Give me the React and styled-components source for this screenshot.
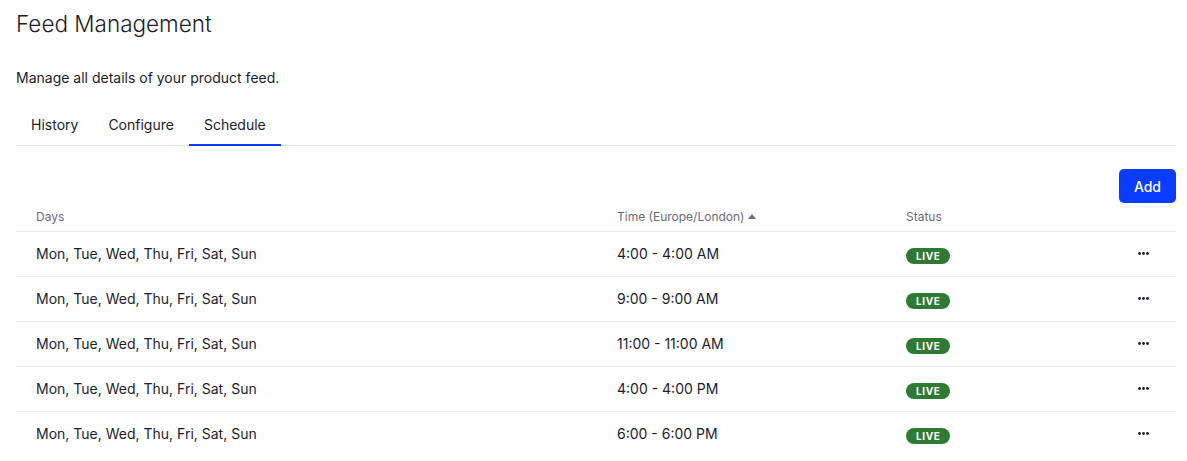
import React from "react";
import styled, { createGlobalStyle } from "styled-components";

const Global = createGlobalStyle`
  html, body { margin: 0; padding: 0; background: #fff; }
  body { font-family: Inter, "Noto Sans", sans-serif; color: #1f1f2e; }
  * { box-sizing: border-box; }
`;

const Page = styled.div`
  padding: 10px 11px 0 16px;
`;

const Title = styled.h1`
  margin: 0;
  font-size: 22.5px;
  font-weight: 300;
  line-height: 28px;
  color: #1c1c2b;
`;

const Subtitle = styled.p`
  margin: 0;
  margin-top: 30px;
  font-size: 14px;
  line-height: 20px;
  color: #1c1c2b;
`;

const Tabs = styled.div`
  display: flex;
  margin-top: 19px;
  border-bottom: 1px solid #e6e6ea;
`;

const Tab = styled.button`
  background: none;
  border: none;
  font-family: inherit;
  font-size: 14px;
  color: #1c1c2b;
  padding: 0 15px 2px;
  height: 39px;
  line-height: 20px;
  cursor: pointer;
  border-bottom: 2px solid ${(p) => (p.$active ? "#0a3cf5" : "transparent")};
  margin-bottom: -1px;
`;

const Toolbar = styled.div`
  display: flex;
  justify-content: flex-end;
  margin-top: 23px;
`;

const AddButton = styled.button`
  background: #0a3cff;
  color: #fff;
  border: none;
  border-radius: 5px;
  font-family: inherit;
  font-size: 14px;
  font-weight: 500;
  height: 34px;
  padding: 0 15px;
  cursor: pointer;
`;

const Grid = `
  display: grid;
  grid-template-columns: 581px 289px 1fr 60px;
  align-items: center;
  padding-left: 20px;
`;

const HeadRow = styled.div`
  ${Grid}
  height: 28px;
  margin-top: 1px;
  border-bottom: 1px solid #e8e8ec;
  font-size: 12px;
  color: #6b6b78;
`;

const HeadCell = styled.div`
  display: flex;
  align-items: center;
  gap: 4px;
  padding-bottom: 2px;
`;

const Row = styled.div`
  ${Grid}
  height: 45px;
  padding-bottom: 2px;
  border-bottom: 1px solid ${(p) => (p.$last ? "transparent" : "#e8e8ec")};
  font-size: 14px;
  color: #1c1c2b;
`;

const Cell = styled.div``;

const Badge = styled.span`
  display: inline-flex;
  align-items: center;
  justify-content: center;
  height: 16px;
  margin-top: 5px;
  padding: 0 10px;
  border-radius: 8px;
  background: #2f7a33;
  color: #fff;
  font-size: 10px;
  font-weight: 700;
  letter-spacing: 0.6px;
`;

const MoreButton = styled.button`
  background: none;
  border: none;
  padding: 0;
  display: flex;
  justify-self: start;
  margin-left: 22px;
  cursor: pointer;
`;

const Caret = () => (
  <svg width="8" height="5" viewBox="0 0 8 5">
    <path d="M0 5 L4 0 L8 5 Z" fill="#6b6b78" />
  </svg>
);

const Dots = () => (
  <svg width="11" height="3" viewBox="0 0 11 3">
    <circle cx="1.5" cy="1.5" r="1.4" fill="#1c1c2b" />
    <circle cx="5.5" cy="1.5" r="1.4" fill="#1c1c2b" />
    <circle cx="9.5" cy="1.5" r="1.4" fill="#1c1c2b" />
  </svg>
);

const rows = [
  "4:00 - 4:00 AM",
  "9:00 - 9:00 AM",
  "11:00 - 11:00 AM",
  "4:00 - 4:00 PM",
  "6:00 - 6:00 PM",
];

export default function App() {
  return (
    <Page>
      <Global />
      <Title>Feed Management</Title>
      <Subtitle>Manage all details of your product feed.</Subtitle>
      <Tabs>
        <Tab>History</Tab>
        <Tab>Configure</Tab>
        <Tab $active>Schedule</Tab>
      </Tabs>
      <Toolbar>
        <AddButton>Add</AddButton>
      </Toolbar>
      <HeadRow>
        <HeadCell>Days</HeadCell>
        <HeadCell>
          Time (Europe/London) <Caret />
        </HeadCell>
        <HeadCell>Status</HeadCell>
        <HeadCell />
      </HeadRow>
      {rows.map((t, i) => (
        <Row key={i} $last={i === rows.length - 1}>
          <Cell>Mon, Tue, Wed, Thu, Fri, Sat, Sun</Cell>
          <Cell>{t}</Cell>
          <Cell>
            <Badge>LIVE</Badge>
          </Cell>
          <MoreButton aria-label="More">
            <Dots />
          </MoreButton>
        </Row>
      ))}
    </Page>
  );
}
